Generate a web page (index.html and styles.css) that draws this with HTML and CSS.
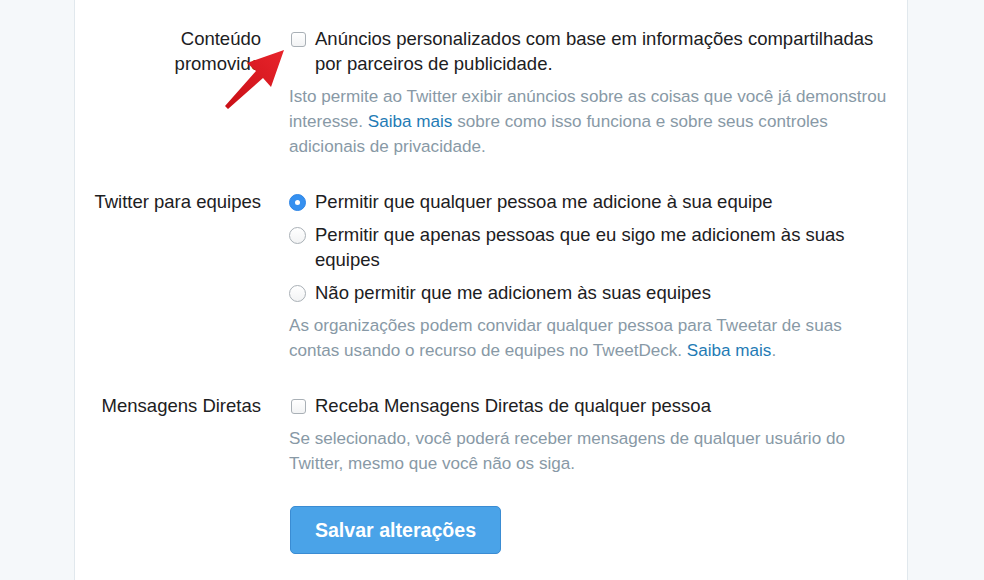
FILE: index.html
```html
<!DOCTYPE html>
<html lang="pt-BR">
<head>
    <meta charset="UTF-8">
    <title>Privacidade e segurança</title>
    <link rel="stylesheet" href="styles.css">
</head>
<body>
    <div class="page">
        <section class="panel">
            <div class="row">
                <div class="label">Conteúdo promovido</div>
                <div class="controls">
                    <div class="option">
                        <span class="box"></span>
                        <span>Anúncios personalizados com base em informações compartilhadas por parceiros de publicidade.</span>
                    </div>
                    <p class="hint">Isto permite ao Twitter exibir anúncios sobre as coisas que você já demonstrou interesse. <a href="#">Saiba mais</a> sobre como isso funciona e sobre seus controles adicionais de privacidade.</p>
                </div>
            </div>
            <div class="row">
                <div class="label">Twitter para equipes</div>
                <div class="controls">
                    <div class="option">
                        <span class="radio checked"></span>
                        <span>Permitir que qualquer pessoa me adicione à sua equipe</span>
                    </div>
                    <div class="option">
                        <span class="radio"></span>
                        <span>Permitir que apenas pessoas que eu sigo me adicionem às suas equipes</span>
                    </div>
                    <div class="option">
                        <span class="radio"></span>
                        <span>Não permitir que me adicionem às suas equipes</span>
                    </div>
                    <p class="hint">As organizações podem convidar qualquer pessoa para Tweetar de suas contas usando o recurso de equipes no TweetDeck. <a href="#">Saiba mais</a>.</p>
                </div>
            </div>
            <div class="row">
                <div class="label">Mensagens Diretas</div>
                <div class="controls">
                    <div class="option">
                        <span class="box"></span>
                        <span>Receba Mensagens Diretas de qualquer pessoa</span>
                    </div>
                    <p class="hint">Se selecionado, você poderá receber mensagens de qualquer usuário do Twitter, mesmo que você não os siga.</p>
                </div>
            </div>
            <div class="actions">
                <button class="save-button">Salvar alterações</button>
            </div>

            <svg class="arrow" width="70" height="70" viewBox="220 45 70 70">
                <defs>
                    <linearGradient id="arrowFill" x1="0" y1="1" x2="1" y2="0">
                        <stop offset="0" stop-color="#c80f16"/>
                        <stop offset="1" stop-color="#e8242b"/>
                    </linearGradient>
                </defs>
                <polygon points="284,50 247,63 256,71 225,106 228,109 263,78 271,87" fill="url(#arrowFill)"/>
            </svg>
        </section>
    </div>
</body>
</html>
```

FILE: styles.css
```css
body {
    margin: 0;
    padding: 0;
    background: #f5f8fa;
    font-family: 'Liberation Sans', Arial, sans-serif;
    color: #1c2022;
}
.page {
    padding-left: 74px;
    width: 834px;
}
.panel {
    position: relative;
    background: #fff;
    border-left: 1px solid #e1e8ed;
    border-right: 1px solid #e1e8ed;
    padding: 26px 16px 26px 17px;
    min-height: 528px;
}
.row {
    display: flex;
    gap: 28px;
    margin-bottom: 30px;
}
.label {
    width: 169px;
    flex-shrink: 0;
    text-align: right;
    font-size: 18.5px;
    line-height: 25px;
}
.controls {
    width: 602px;
}
.option {
    display: flex;
    gap: 9px;
    align-items: flex-start;
    font-size: 18.5px;
    line-height: 25px;
    margin-bottom: 8px;
}
.box {
    flex-shrink: 0;
    width: 13px;
    height: 13px;
    margin: 6px 0 0 2px;
    border: 1px solid #a9b0b6;
    border-radius: 3px;
    background: linear-gradient(#fff, #f2f3f4);
}
.radio {
    flex-shrink: 0;
    width: 15px;
    height: 15px;
    margin-top: 5px;
    border: 1px solid #a9b0b6;
    border-radius: 50%;
    background: linear-gradient(#fff, #f2f3f4);
    position: relative;
}
.radio.checked {
    background: #3590f0;
    border-color: #2f86e6;
}
.radio.checked::after {
    content: '';
    position: absolute;
    left: 5px;
    top: 5px;
    width: 5px;
    height: 5px;
    border-radius: 50%;
    background: #fff;
}
.hint {
    margin: 0;
    font-size: 17.1px;
    line-height: 25px;
    color: #8899a6;
}
.hint a {
    color: #1f7bb5;
    text-decoration: none;
}
.actions {
    padding-left: 198px;
}
.save-button {
    width: 211px;
    height: 48px;
    background: #4aa3e8;
    border: 1px solid #3a8cd3;
    border-radius: 5px;
    color: #fff;
    font-family: 'Liberation Sans', Arial, sans-serif;
    font-weight: bold;
    font-size: 19.6px;
    margin-top: 0;
}
.arrow {
    position: absolute;
    left: 145px;
    top: 45px;
}
```
